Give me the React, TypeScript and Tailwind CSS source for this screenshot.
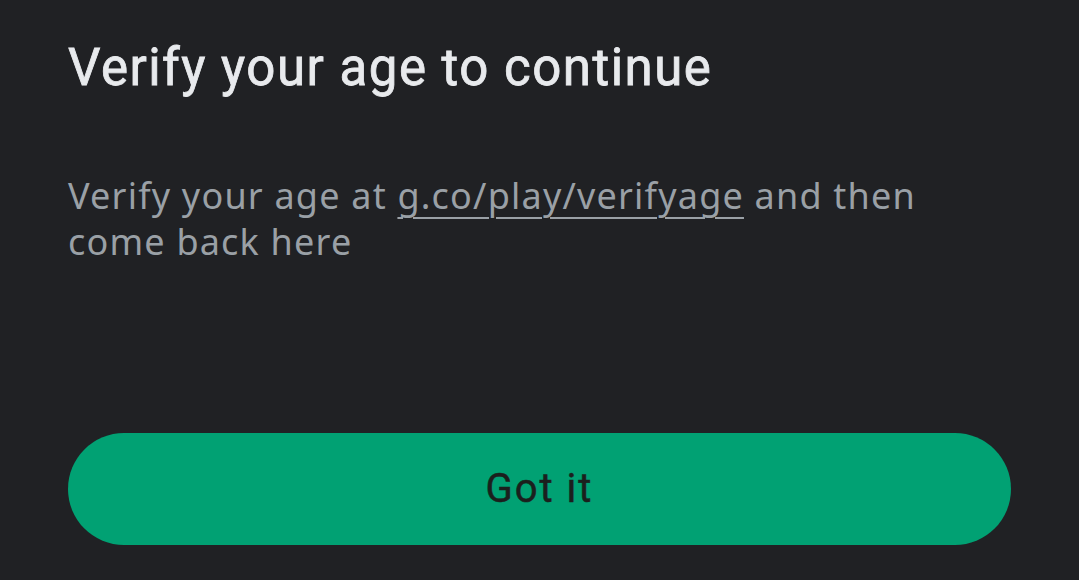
export default function App() {
  return (
    <main className="flex h-[580px] w-full flex-col bg-[#202124] px-[68px]">
      <h1 className="mt-[38px] font-['Roboto',sans-serif] text-[51px] leading-[60px] font-normal tracking-[1.5px] text-[#e8eaed] [-webkit-text-stroke:0.8px_#e8eaed]">
        Verify your age to continue
      </h1>
      <p className="mt-[75px] max-w-[880px] font-['Noto_Sans',sans-serif] text-[36px] leading-[46px] tracking-[1.2px] text-[#9aa0a6]">
        Verify your age at{" "}
        <a className="underline decoration-2 underline-offset-[8px]">g.co/play/verifyage</a>{" "}
        and then come back here
      </p>
      <button className="mt-auto mb-[35px] h-[112px] w-[943px] rounded-full bg-[#01a173] font-['Roboto',sans-serif] text-[40px] font-normal tracking-[2px] text-[#1b1f1d] [-webkit-text-stroke:0.5px_#1b1f1d]">
        Got it
      </button>
    </main>
  );
}
